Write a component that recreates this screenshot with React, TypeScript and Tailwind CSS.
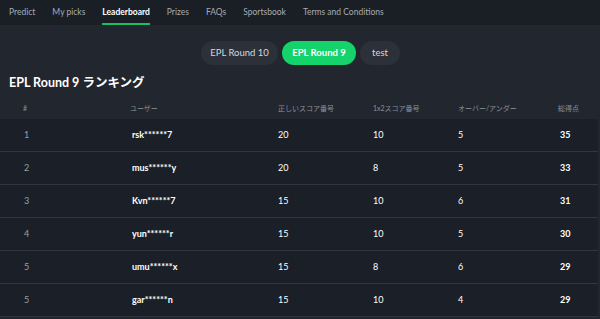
import React from 'react';

const navItems = ['Predict', 'My picks', 'Leaderboard', 'Prizes', 'FAQs', 'Sportsbook', 'Terms and Conditions'];

const rows = [
  { rank: 1, user: 'rsk******7', correct: 20, oneX2: 10, ou: 5, total: 35 },
  { rank: 2, user: 'mus******y', correct: 20, oneX2: 8, ou: 5, total: 33 },
  { rank: 3, user: 'Kvn******7', correct: 15, oneX2: 10, ou: 6, total: 31 },
  { rank: 4, user: 'yun******r', correct: 15, oneX2: 10, ou: 5, total: 30 },
  { rank: 5, user: 'umu******x', correct: 15, oneX2: 8, ou: 6, total: 29 },
  { rank: 5, user: 'gar******n', correct: 15, oneX2: 10, ou: 4, total: 29 },
];

const cols = 'grid grid-cols-[107px_148px_95px_85px_100px_1fr]';

export default function App() {
  return (
    <div
      className="w-[600px] h-[319px] overflow-hidden bg-[#22272f] text-white"
      style={{ fontFamily: 'Lato, "Noto Sans CJK JP", sans-serif' }}
    >
      {/* Nav */}
      <nav className="h-[25px] bg-[#1a1e25] flex items-stretch pl-[9px] gap-[17px] text-[8.5px]">
        {navItems.map((item) => (
          <div
            key={item}
            className={
              item === 'Leaderboard'
                ? 'flex items-center font-bold text-white border-b-2 border-[#1bbf62] pt-[2px]'
                : 'flex items-center text-[#a7acb4]'
            }
          >
            {item}
          </div>
        ))}
      </nav>

      {/* Round tabs */}
      <div className="flex justify-center gap-[4px] pt-[16px] pl-[1px]">
        <button className="h-[24px] w-[77px] rounded-full bg-[#2b3039] text-[9.5px] text-[#d5d8dd]">EPL Round 10</button>
        <button className="h-[24px] w-[74px] rounded-full bg-[#14d36b] text-[9.5px] font-bold text-white">EPL Round 9</button>
        <button className="h-[24px] w-[40px] rounded-full bg-[#2b3039] text-[9.5px] text-[#d5d8dd]">test</button>
      </div>

      {/* Title */}
      <h1 className="pl-[9px] pt-[10px] text-[12.5px] font-bold leading-[16px]">EPL Round 9 ランキング</h1>

      {/* Table */}
      <div className="mt-[6px] pr-[2px]">
        <div className={`${cols} h-[22px] items-center pl-[23px] text-[7px] text-[#8a9099]`}>
          <span>#</span>
          <span>ユーザー</span>
          <span>正しいスコア番号</span>
          <span>1x2スコア番号</span>
          <span>オーバー/アンダー</span>
          <span>総得点</span>
        </div>
        {rows.map((r, i) => (
          <div
            key={i}
            className={`${cols} h-[33px] items-center pl-[23px] bg-[#1b1f27] border-b border-[#30353e] text-[9px]`}
          >
            <span className="text-[#9aa0a8] pl-[1px]">{r.rank}</span>
            <span className="font-bold pl-[2px]">{r.user}</span>
            <span>{r.correct}</span>
            <span>{r.oneX2}</span>
            <span>{r.ou}</span>
            <span className="font-bold pl-[2px]">{r.total}</span>
          </div>
        ))}
      </div>
    </div>
  );
}
